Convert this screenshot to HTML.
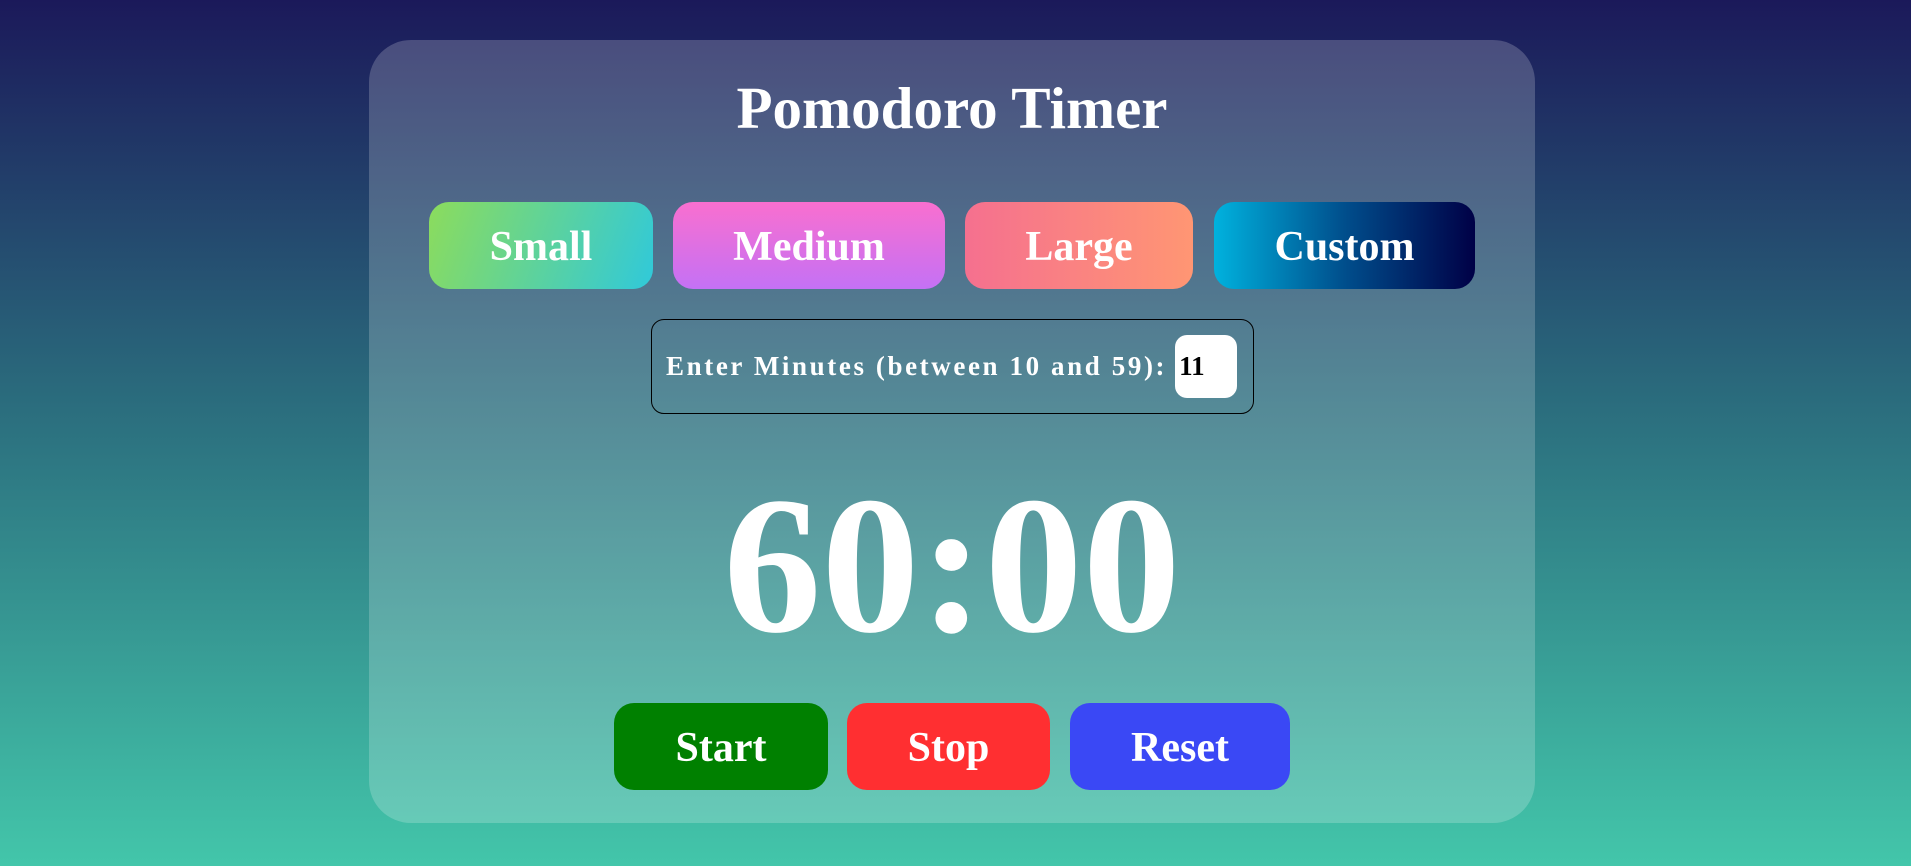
<!DOCTYPE html>
<html><head><style>
*{margin:0;padding:0;box-sizing:border-box}
body{width:1911px;height:866px;overflow:hidden;background:linear-gradient(#1b195a,#2a6a7c 45%,#43c6aa);font-family:"Liberation Serif",serif;font-weight:bold;color:#fff;position:relative}
.card{position:absolute;left:369px;top:40px;width:1166px;height:783px;border-radius:42px;background:rgba(255,255,255,0.2)}
.a{position:absolute;display:flex;align-items:center;justify-content:center;white-space:nowrap}
.title{left:369px;width:1166px;top:71px;height:74px;font-size:59px}
.b{height:87px;top:202px;border-radius:20px;font-size:42px;padding-top:2px}
.c{height:87px;top:703px;border-radius:20px;font-size:42px;padding-top:2px}
.box{left:651px;top:319px;width:603px;height:95px;border:1px solid #000;border-radius:13px;font-size:27px;letter-spacing:2.6px;justify-content:flex-start;padding-left:14px}
.inp{width:62px;height:63px;background:#fff;border-radius:12px;color:#000;margin-left:8px;display:flex;align-items:center;padding-left:4px;letter-spacing:0}
.timer{left:369px;width:1166px;top:450px;height:230px;font-size:196px}
</style></head><body>
<div class="card"></div>
<div class="a title">Pomodoro Timer</div>
<div class="a b" style="left:429px;width:224px;background:linear-gradient(110deg,#8cdc5c,#30c9da)">Small</div>
<div class="a b" style="left:673px;width:272px;background:linear-gradient(#f96fcf,#c471f5)">Medium</div>
<div class="a b" style="left:965px;width:228px;background:linear-gradient(90deg,#f5708f,#ff9673)">Large</div>
<div class="a b" style="left:1214px;width:261px;background:linear-gradient(90deg,#00b2de,#004e8c 50%,#000046)">Custom</div>
<div class="a box">Enter Minutes (between 10 and 59):<div class="inp">11</div></div>
<div class="a timer">60:00</div>
<div class="a c" style="left:614px;width:214px;background:#008000">Start</div>
<div class="a c" style="left:847px;width:203px;background:#ff2f31">Stop</div>
<div class="a c" style="left:1070px;width:220px;background:#3a48f5">Reset</div>
</body></html>
